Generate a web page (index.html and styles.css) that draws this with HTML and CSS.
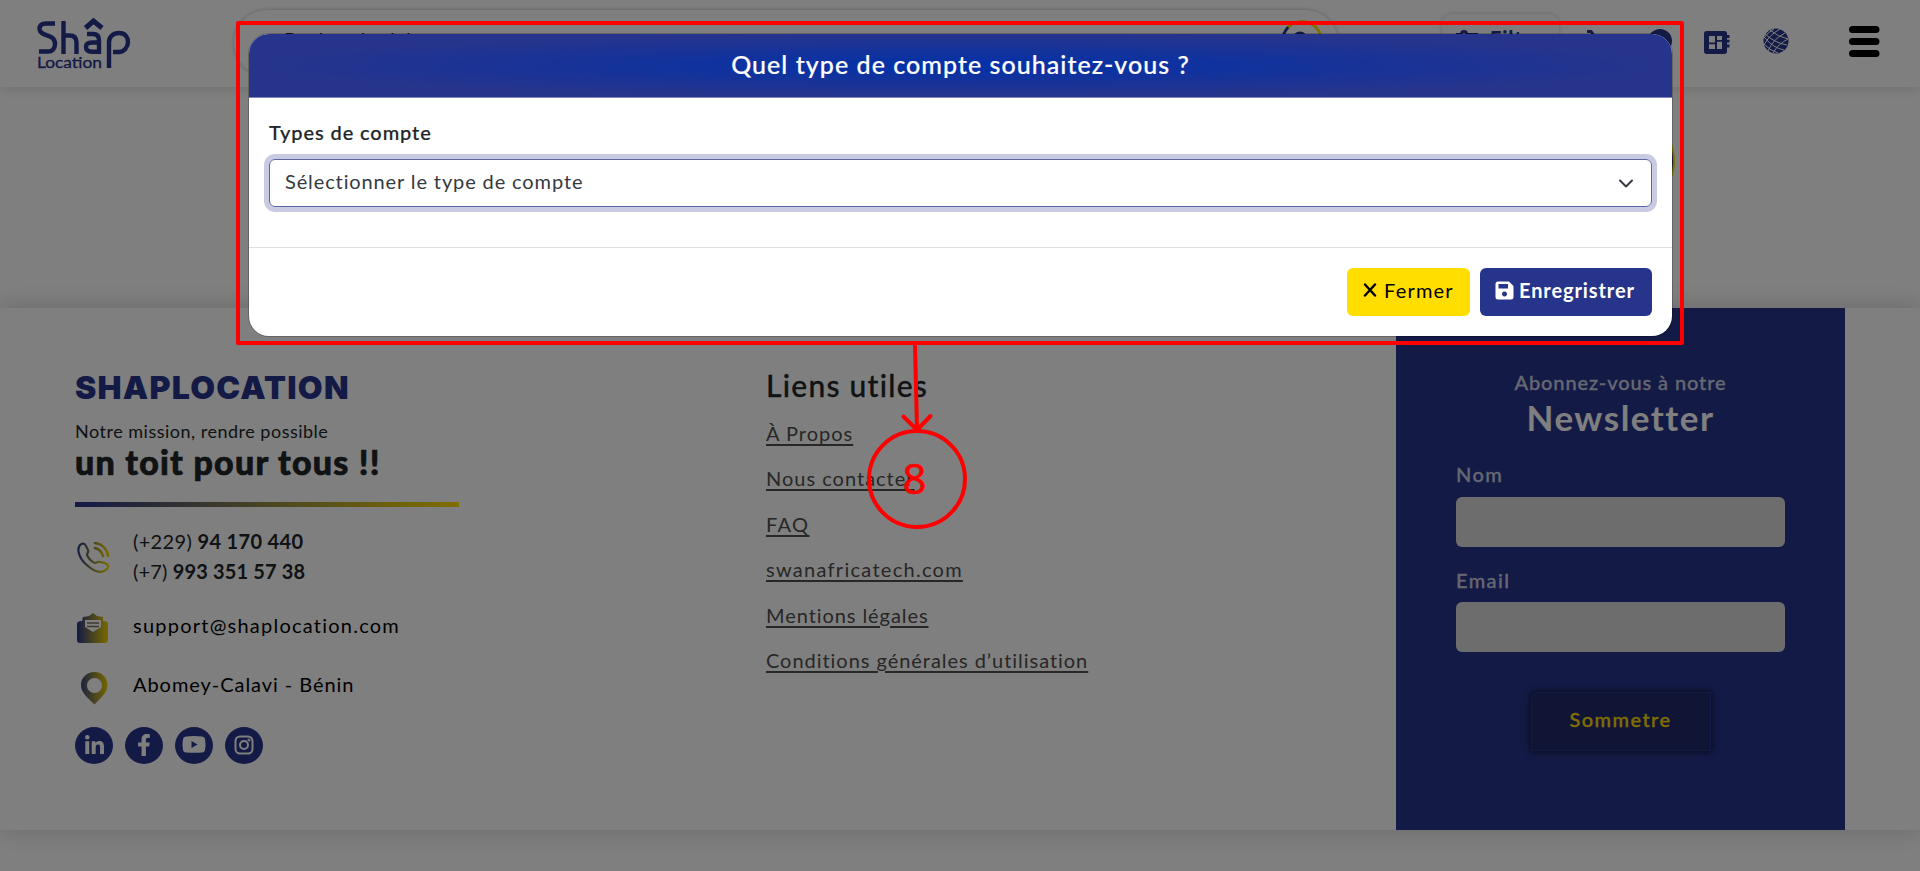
FILE: index.html
```html
<!DOCTYPE html>
<html lang="fr">
<head>
<meta charset="utf-8">
<title>Shap Location</title>
<link rel="stylesheet" href="styles.css">
</head>
<body>
<header class="topbar">
  <svg class="logo" width="96" height="54" viewBox="0 0 96 54" role="img" aria-label="Shâp Location">
    <g fill="none" stroke="#27348b" stroke-width="4.400">
      <path d="M18 6.500H9C4 6.500 2.500 9 2.500 12C2.500 20 18 16 18 27C18 32 15 34.500 11 34.500H2"/>
      <path d="M26.500 4v33M26.500 18.500h6c5 0 7 2.500 7 7v11.500"/>
      <path d="M50 17h6c4 0 6 2 6 6v11.700h-7c-4 0-6-1.500-6-4.700s2-4.500 6-4.500h6"/>
      <path d="M48.500 11l8-7l8.500 7" stroke-width="5"/>
      <path d="M72 51V25c0-5 4-9 10-9s9 4 9 9s-4 10-9 10h-6"/>
    </g>
    <text class="logo-sub" x="0" y="51" textLength="65" lengthAdjust="spacingAndGlyphs">Location</text>
  </svg>
  <div class="search">
    <span class="search-text">Recherche ici...</span>
    <span class="search-btn"><svg width="18" height="18" viewBox="0 0 18 18"><circle cx="8" cy="8" r="6" fill="none" stroke="#27348b" stroke-width="3"/></svg></span>
  </div>
  <button class="filter"><svg width="22" height="20" viewBox="0 0 22 20" fill="none" stroke="#27348b" stroke-width="3"><path d="M0 4.500h5M9 4.500h13M0 13h13"/><circle cx="8" cy="4" r="2.500"/></svg>Filtre</button>
  <nav class="nav-icons">
    <svg width="28" height="32" viewBox="0 0 28 32"><path d="M9 3.500h4l2 3v6l8 7" fill="none" stroke="#27348b" stroke-width="3"/></svg>
    <svg width="26" height="32" viewBox="0 0 26 32"><circle cx="13" cy="13" r="12" fill="#27348b"/></svg>
    <svg class="book" width="26" height="23" viewBox="0 0 26 28" preserveAspectRatio="none"><path fill="#27348b" fill-rule="evenodd" d="M3 0h17q3 0 3 3v2h2.500v3.500H23v2h2.500V14H23v2.500h2.500V20H23v5q0 3-3 3H3q-3 0-3-3V3q0-3 3-3zM5 6v8h6V6zM13 6v5h5V6zM5 16v6h6v-6zM13 13v9h5v-9z"/></svg>
    <svg class="globe" width="26" height="26" viewBox="0 0 26 26"><circle cx="13" cy="13" r="12.500" fill="#27348b"/><g fill="none" stroke="#fff" stroke-width="1"><path d="M1 9Q10 20 21 22M2 6Q12 15 24 17M7 2Q15 9 25 11M1 16Q6 22 15 25M17 1Q6 7 1 17M22 5Q10 11 5 23M25 11Q15 16 10 25M11 1Q5 4 1 10"/></g></svg>
    <svg class="burger" width="32" height="44" viewBox="0 0 32 44"><path d="M4.500 6.500h23.500M4.500 18.500h23.500M4.500 30.500h23.500" stroke="#000" stroke-width="7" stroke-linecap="round"/></svg>
  </nav>
</header>
<main class="content"><span class="chat"></span></main>
<footer class="footer">
  <section class="brand">
    <h2 class="brand-name"><span>SHAPLOCATION</span></h2>
    <p class="mission"><span>Notre mission, rendre possible</span></p>
    <p class="slogan"><span>un toit pour tous !!</span></p>
    <div class="rule"></div>
    <div class="contact phones">
      <svg width="34" height="36" viewBox="0 0 34 36"><defs><linearGradient id="g" x1="0" x2="34" y1="0" y2="0" gradientUnits="userSpaceOnUse"><stop offset="0" stop-color="#27348b"/><stop offset=".75" stop-color="#d0b914"/><stop offset="1" stop-color="#ffde00"/></linearGradient></defs><g fill="none" stroke="url(#g)" stroke-width="2.200" stroke-linecap="round"><path d="M3 3C5 1 8 1 9 4l2 4c1 2-1 3-1 5 2 4 5 7 8 8 2 0 3-2 5-1l5 1c4 2 4 4 2 6-5 5-12 3-19-3C3 18-1 8 3 3z"/><path d="M18 6c4 1 7 4 8 8M18 1c7 1 12 6 13 13" stroke-width="2.600"/></g></svg>
      <p><span class="t-ph1">(+229) <b>94 170 440</b></span><br><span class="t-ph2">(+7) <b>993 351 57 38</b></span></p>
    </div>
    <div class="contact mail">
      <svg width="34" height="32" viewBox="0 0 34 32"><path fill="url(#g)" fill-rule="evenodd" d="M6 4l6-1 4-3 4 3 6 1v4q5 0 5 3v16q0 3-3 3H3q-3 0-3-3V11q0-3 5-3zM8 7v7l8 5 8-5V7z"/><path d="M10 10h12M10 13.500h12" stroke="#7a7560" stroke-width="1.500"/></svg>
      <p><span>support@shaplocation.com</span></p>
    </div>
    <div class="contact place">
      <svg width="34" height="33" viewBox="0 0 34 33"><path fill="url(#g)" fill-rule="evenodd" d="M16.500 0c8 0 13 6 13 13 0 8-8 14-13 19.500C11 27 3 21 3 13 3 6 8.500 0 16.500 0zm0 6a7.500 7.500 0 1 0 .01 0z"/></svg>
      <p><span>Abomey-Calavi - Bénin</span></p>
    </div>
    <div class="socials">
      <span><svg width="19" height="19" viewBox="0 0 448 448"><path fill="#fff" d="M100 448H7V149h93zM54 108a54 54 0 1 1 0-108 54 54 0 0 1 0 108zM448 448h-93V302c0-35-1-79-48-79-49 0-56 38-56 77v148h-93V149h89v41h1c13-24 43-48 88-48 94 0 112 62 112 142z"/></svg></span>
      <span><svg width="14" height="22" viewBox="0 0 320 512"><path fill="#fff" d="M279 288l14-93h-89v-60c0-25 12-50 52-50h41V7s-37-7-72-7c-74 0-122 44-122 125v70H22v93h81v224h101V288z"/></svg></span>
      <span><svg width="24" height="17" viewBox="0 0 24 17"><path fill="#fff" fill-rule="evenodd" d="M4 .5Q12-.5 20 .5q3 .5 3 3 1 5 0 10 0 2.500-3 3-8 .7-16 0-3-.5-3-3-1-5 0-10 0-2.500 3-3zM9.500 5v7l6-3.500z"/></svg></span>
      <span><svg width="20" height="20" viewBox="0 0 20 20" fill="none" stroke="#fff" stroke-width="2"><rect x="1.500" y="1.500" width="17" height="17" rx="4.500"/><circle cx="10" cy="10" r="4"/><circle cx="15" cy="5" r=".6"/></svg></span>
    </div>
  </section>
  <section class="links">
    <h3><span>Liens utiles</span></h3>
    <ul>
      <li><a class="l1">À Propos</a></li>
      <li><a class="l2">Nous contacter</a></li>
      <li><a class="l3">FAQ</a></li>
      <li><a class="l4">swanafricatech.com</a></li>
      <li><a class="l5">Mentions légales</a></li>
      <li><a class="l6">Conditions générales d’utilisation</a></li>
    </ul>
  </section>
  <section class="newsletter">
    <p class="sub"><span>Abonnez-vous à notre</span></p>
    <h3 class="nl-title"><span>Newsletter</span></h3>
    <label class="nl-label"><span>Nom</span></label>
    <div class="nl-input"></div>
    <label class="nl-label second"><span>Email</span></label>
    <div class="nl-input"></div>
    <button class="nl-btn"><span>Sommetre</span></button>
  </section>
</footer>
<div class="bottom"></div>

<div class="backdrop"></div>
<div class="modal">
  <div class="modal-head"><h5><span>Quel type de compte souhaitez-vous ?</span></h5></div>
  <div class="modal-body">
    <label class="field-label"><span>Types de compte</span></label>
    <div class="select"><span>Sélectionner le type de compte</span>
      <svg width="16" height="16" viewBox="0 0 16 16"><path d="M2 5.500l6 6 6-6" fill="none" stroke="#343a40" stroke-width="2" stroke-linecap="round" stroke-linejoin="round"/></svg>
    </div>
  </div>
  <div class="modal-foot">
    <button class="btn close"><svg width="14" height="14" viewBox="0 0 14 14"><path d="M2 1.500l10 11M12 1.500l-10 11" stroke="#000" stroke-width="2.400" stroke-linecap="round"/></svg><span>Fermer</span></button>
    <button class="btn save"><svg width="19" height="19" viewBox="0 0 19 19"><path fill="#fff" fill-rule="evenodd" d="M3 .5h11L18.500 5v11q0 2.500-2.500 2.500H3Q.5 18.500.5 16V3Q.5.500 3 .5zM3.500 3v4.500h9.500V3zM9.500 10.500a2.500 2.500 0 1 0 .01 0z"/></svg><span>Enregristrer</span></button>
  </div>
</div>

<svg class="annotation" width="1920" height="871" viewBox="0 0 1920 871">
  <g fill="none" stroke="#f00" stroke-width="4" stroke-linecap="round" stroke-linejoin="round">
    <rect x="238" y="23" width="1444" height="320"/>
    <path d="M915 345l2 84M903.500 416.500l13.500 13.500l13.500-14"/>
    <circle cx="917" cy="479" r="48"/>
  </g>
  <text class="step" x="914.500" y="494" text-anchor="middle">8</text>
</svg>
</body>
</html>
```
FILE: styles.css
```css
* { box-sizing: border-box; }
body, h2, h3, h5, p, ul { margin: 0; padding: 0; }
body {
  width: 1920px;
  height: 871px;
  overflow: hidden;
  background: #fff;
  color: #212529;
  font-family: Lato, "Open Sans", sans-serif;
  font-size: 20px;
  line-height: 30px;
  letter-spacing: .9px;
}
button { font: inherit; letter-spacing: inherit; border: 0; }
span, a { white-space: nowrap; }

/* Top bar */
.topbar {
  display: flex;
  align-items: flex-start;
  height: 87px;
  padding-left: 37px;
  box-shadow: 0 2px 12px rgba(0, 0, 0, .12);
}
.logo { margin-top: 17px; flex: none; }
.logo-sub { font: 15.500px Lato, sans-serif; letter-spacing: 0; fill: #27348b; stroke: #27348b; stroke-width: .3; }
.search {
  display: flex;
  justify-content: space-between;
  flex: none;
  width: 1104px;
  height: 66px;
  margin: 10px 0 0 101px;
  padding: 10px 15px 0 50px;
  border-radius: 33px;
  box-shadow: 0 0 4px rgba(0, 0, 0, .25);
}
.search-text { padding-top: 4px; font-size: 20px; }
.search-btn {
  width: 42px;
  height: 42px;
  padding: 8px;
  border: 3px solid;
  border-color: #ffde00 #ffde00 #27348b #27348b;
  border-radius: 50%;
}
.search-btn svg { display: block; }
.filter {
  display: flex;
  gap: 12px;
  flex: none;
  width: 117px;
  height: 52px;
  margin: 14px 0 0 104px;
  padding: 9px 14px;
  border-radius: 10px;
  background: #fafafa;
  color: #27348b;
  font-weight: 900;
  box-shadow: 0 0 5px rgba(0, 0, 0, .2);
}
.filter svg { margin-top: 7px; flex: none; }
.nav-icons { display: flex; flex: none; padding: 28px 0 0 19px; }
.nav-icons svg { flex: none; }
.nav-icons svg:nth-child(2) { margin-left: 41px; }
.nav-icons .book { margin: 3px 0 0 31px; }
.nav-icons .globe { margin-left: 33px; }
.nav-icons .burger { margin: -5px 0 0 59px; }

.content { height: 221px; padding: 49px 0 0 1650px; }
.chat { display: block; width: 25px; height: 50px; border-radius: 50%; background: #27348b; border: 2px solid #ffde00; }

/* Footer */
.footer {
  display: grid;
  grid-template-columns: 691px 630px 449px;
  height: 522px;
  padding-left: 75px;
  box-shadow: 0 0 26px rgba(0, 0, 0, .18);
}
.brand { padding-top: 60px; }
.brand-name { font: 900 32px/40px Inter, sans-serif; letter-spacing: 1.250px; color: #27348b; }
.mission { margin-top: 10px; font-size: 18px; line-height: 26px; letter-spacing: .5px; }
.slogan { font-size: 34px; line-height: 40px; font-weight: 900; letter-spacing: 1.220px; margin-top: -2px; -webkit-text-stroke: .7px #212529; }
.rule { width: 384px; height: 5px; margin-top: 20px; background: linear-gradient(90deg, #27348b, #ffde00); }
.contact { display: flex; gap: 22px; padding-left: 2px; color: #000; }
.contact p { flex: none; }
.phones { margin-top: 19px; color: #212529; }
.phones svg { margin-top: 16px; }
.t-ph1 { letter-spacing: .33px; }
.t-ph2 { letter-spacing: .15px; }
.mail { margin-top: 24px; letter-spacing: 1.230px; }
.mail svg { margin-top: 3px; }
.place { margin-top: 24px; letter-spacing: .95px; }
.place svg { margin: 3px -1px 0 1px; }
.socials { display: flex; gap: 12px; margin-top: 22px; }
.socials span {
  display: flex; align-items: center; justify-content: center;
  width: 38px; height: 37px; padding-bottom: 2px; border-radius: 50%; background: #27348b;
}

.links { padding-top: 57px; }
.links h3 { font-size: 30px; line-height: 40px; font-weight: 500; letter-spacing: 1.250px; -webkit-text-stroke: .3px #212529; }
.links ul { list-style: none; padding-top: 13px; }
.links li { height: 45.400px; line-height: 30px; }
.links a { color: #4e4e4e; text-decoration: underline; text-decoration-thickness: 1.500px; text-underline-offset: 3px; letter-spacing: 1px; }
.links .l3 { letter-spacing: 1.400px; }
.links .l4 { letter-spacing: 1.280px; }
.links .l5 { letter-spacing: .93px; }
.links .l6 { letter-spacing: .96px; }

.newsletter { background: #27348b; padding: 59px 60px 0; color: #fff; }
.sub { text-align: center; color: #cdd0e2; font-weight: 500; -webkit-text-stroke: .3px #cdd0e2; }
.nl-title { text-align: center; color: #fff; font-size: 35px; line-height: 42px; font-weight: 700; letter-spacing: 1.500px; margin-top: -1px; }
.nl-label { display: block; height: 30px; margin: 21px 0 8px; color: #cdd0e2; font-weight: 500; letter-spacing: 1.400px; -webkit-text-stroke: .3px #cdd0e2; }
.nl-label.second { margin: 18px 0 7px; }
.nl-input { height: 50px; border-radius: 6px; background: #dadada; }
.nl-btn {
  display: block; width: 180px; height: 59px; margin: 40px auto 0; padding-bottom: 7px;
  background: #202b6c; color: #ffde00; font-weight: 500; letter-spacing: 1.400px;
  -webkit-text-stroke: .3px #ffde00;
  border-radius: 6px 0 0 0; border: 1px solid #27348b;
  box-shadow: 0 0 6px 1px rgba(0, 0, 0, .6);
}
.bottom { height: 41px; }

/* Modal */
.backdrop { position: absolute; inset: 0; background: rgba(0, 0, 0, .5); }
.modal {
  position: absolute; left: 249px; top: 34px; width: 1423px; height: 302px;
  border-radius: 20px; background: #fff; overflow: hidden;
  box-shadow: 0 0 0 1px rgba(0, 0, 0, .2);
}
.modal-head {
  height: 64px; text-align: center; color: #fff;
  background: radial-gradient(#0331a9, #27348b 71%);
  border-bottom: 1px solid #7f88bd;
}
.modal-head h5 { font-size: 25px; line-height: 60px; font-weight: 500; letter-spacing: 1.040px; -webkit-text-stroke: .2px #fff; }
.modal-body { height: 149px; padding: 20px; }
.field-label { display: block; font-weight: 500; height: 41px; margin-top: -1px; margin-bottom: 1px; -webkit-text-stroke: .2px #212529; }
.select {
  display: flex; justify-content: space-between; align-items: center;
  height: 48px; padding: 0 17px 2px 15px;
  border: 1px solid #5d659f; border-radius: 6px;
  box-shadow: 0 0 0 5px #c9cbe2; color: #343a40; letter-spacing: .88px;
}
.select span { margin-top: -2px; }
.select svg { margin-top: 1px; }
.modal-foot { display: flex; justify-content: flex-end; gap: 10px; padding: 20px; border-top: 1px solid #dee2e6; }
.btn { display: flex; align-items: center; height: 48px; padding: 0 16px 4px; border-radius: 6px; }
.close { width: 123px; background: #ffde00; color: #000; gap: 7px; letter-spacing: 1.200px; }
.save { width: 172px; background: #27348b; color: #fff; font-weight: 700; gap: 5px; padding-left: 15px; }

.annotation { position: absolute; left: 0; top: 0; }
.step { font: 400 42px "Noto Sans", sans-serif; letter-spacing: 0; fill: #f00; stroke: #f00; stroke-width: .6; }
```
